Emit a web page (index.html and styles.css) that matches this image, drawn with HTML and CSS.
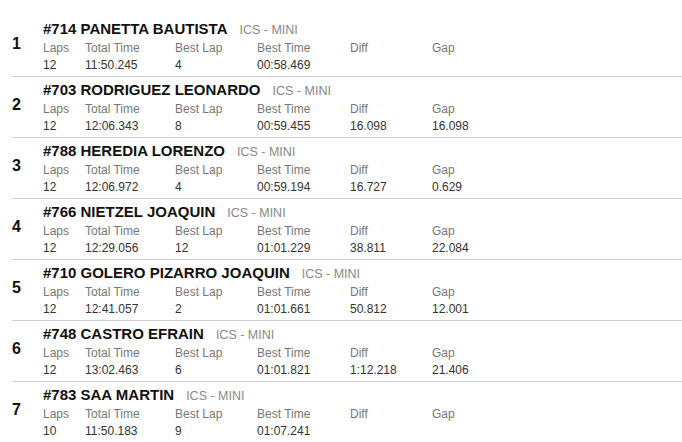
FILE: index.html
```html
<!DOCTYPE html>
<html>
<head>
<meta charset="utf-8">
<link rel="stylesheet" href="styles.css">
</head>
<body>
<div class="results">
  <div class="row">
    <div class="pos">1</div>
    <div class="info">
      <div class="title"><span class="name">#714 PANETTA BAUTISTA</span><span class="cat">ICS - MINI</span></div>
      <div class="grid labels"><span>Laps</span><span>Total Time</span><span>Best Lap</span><span>Best Time</span><span>Diff</span><span>Gap</span></div>
      <div class="grid values"><span>12</span><span>11:50.245</span><span>4</span><span>00:58.469</span><span></span><span></span></div>
    </div>
  </div>
  <div class="row">
    <div class="pos">2</div>
    <div class="info">
      <div class="title"><span class="name">#703 RODRIGUEZ LEONARDO</span><span class="cat">ICS - MINI</span></div>
      <div class="grid labels"><span>Laps</span><span>Total Time</span><span>Best Lap</span><span>Best Time</span><span>Diff</span><span>Gap</span></div>
      <div class="grid values"><span>12</span><span>12:06.343</span><span>8</span><span>00:59.455</span><span>16.098</span><span>16.098</span></div>
    </div>
  </div>
  <div class="row">
    <div class="pos">3</div>
    <div class="info">
      <div class="title"><span class="name">#788 HEREDIA LORENZO</span><span class="cat">ICS - MINI</span></div>
      <div class="grid labels"><span>Laps</span><span>Total Time</span><span>Best Lap</span><span>Best Time</span><span>Diff</span><span>Gap</span></div>
      <div class="grid values"><span>12</span><span>12:06.972</span><span>4</span><span>00:59.194</span><span>16.727</span><span>0.629</span></div>
    </div>
  </div>
  <div class="row">
    <div class="pos">4</div>
    <div class="info">
      <div class="title"><span class="name">#766 NIETZEL JOAQUIN</span><span class="cat">ICS - MINI</span></div>
      <div class="grid labels"><span>Laps</span><span>Total Time</span><span>Best Lap</span><span>Best Time</span><span>Diff</span><span>Gap</span></div>
      <div class="grid values"><span>12</span><span>12:29.056</span><span>12</span><span>01:01.229</span><span>38.811</span><span>22.084</span></div>
    </div>
  </div>
  <div class="row">
    <div class="pos">5</div>
    <div class="info">
      <div class="title"><span class="name">#710 GOLERO PIZARRO JOAQUIN</span><span class="cat">ICS - MINI</span></div>
      <div class="grid labels"><span>Laps</span><span>Total Time</span><span>Best Lap</span><span>Best Time</span><span>Diff</span><span>Gap</span></div>
      <div class="grid values"><span>12</span><span>12:41.057</span><span>2</span><span>01:01.661</span><span>50.812</span><span>12.001</span></div>
    </div>
  </div>
  <div class="row">
    <div class="pos">6</div>
    <div class="info">
      <div class="title"><span class="name">#748 CASTRO EFRAIN</span><span class="cat">ICS - MINI</span></div>
      <div class="grid labels"><span>Laps</span><span>Total Time</span><span>Best Lap</span><span>Best Time</span><span>Diff</span><span>Gap</span></div>
      <div class="grid values"><span>12</span><span>13:02.463</span><span>6</span><span>01:01.821</span><span>1:12.218</span><span>21.406</span></div>
    </div>
  </div>
  <div class="row">
    <div class="pos">7</div>
    <div class="info">
      <div class="title"><span class="name">#783 SAA MARTIN</span><span class="cat">ICS - MINI</span></div>
      <div class="grid labels"><span>Laps</span><span>Total Time</span><span>Best Lap</span><span>Best Time</span><span>Diff</span><span>Gap</span></div>
      <div class="grid values"><span>10</span><span>11:50.183</span><span>9</span><span>01:07.241</span><span></span><span></span></div>
    </div>
  </div>
</div>
</body>
</html>
```
FILE: styles.css
```css
html, body {
  margin: 0;
  padding: 0;
  background: #fff;
}
body {
  font-family: "Liberation Sans", Arial, sans-serif;
  color: #333;
}
.results {
  padding: 16px 0 0 12px;
}
.row {
  display: flex;
  padding: 3px 0 3px 0;
  border-bottom: 1px solid #cfcfcf;
  height: 54px;
}
.row:last-child {
  border-bottom: none;
}
.pos {
  width: 31px;
  flex: none;
  font-size: 16px;
  font-weight: bold;
  line-height: 20px;
  padding-top: 15px;
  color: #111;
}
.info {
  display: flex;
  flex-direction: column;
}
.title {
  line-height: 20px;
  white-space: nowrap;
}
.name {
  font-size: 15px;
  font-weight: bold;
  color: #111;
}
.cat {
  font-size: 12.5px;
  color: #888;
  margin-left: 12px;
}
.grid {
  display: grid;
  grid-template-columns: 42px 90px 82px 93px 82px 80px;
  font-size: 12px;
  line-height: 17px;
  white-space: nowrap;
}
.labels {
  color: #777;
}
.values {
  color: #333;
}
```
